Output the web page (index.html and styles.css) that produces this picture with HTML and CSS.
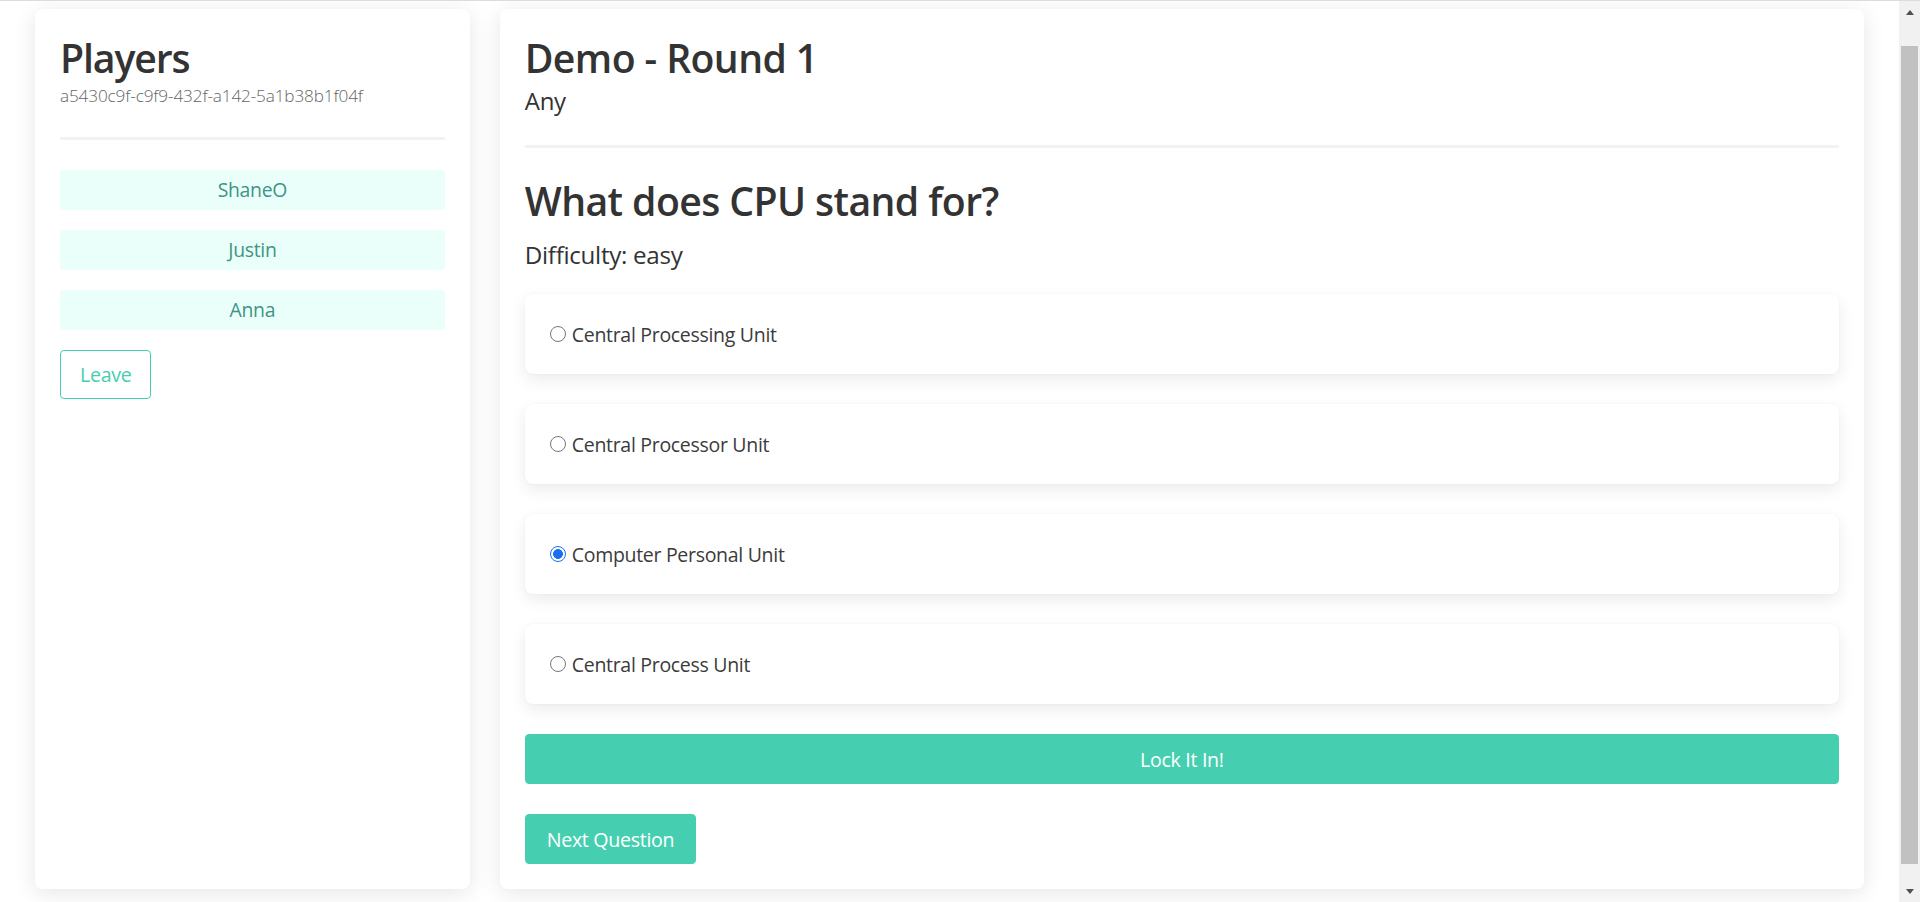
FILE: index.html
```html
<!DOCTYPE html>
<html lang="en">
<head>
<meta charset="utf-8">
<title>Trivia - Demo</title>
<link rel="stylesheet" href="styles.css">
</head>
<body>
<div class="viewport">
  <div class="page">
    <aside class="card players">
      <h2 class="title title-players">Players</h2>
      <div class="room-id">a5430c9f-c9f9-432f-a142-5a1b38b1f04f</div>
      <hr class="divider">
      <ul class="player-list">
        <li class="player">ShaneO</li>
        <li class="player">Justin</li>
        <li class="player">Anna</li>
      </ul>
      <button class="btn btn-outline" type="button">Leave</button>
    </aside>
    <main class="card game">
      <h1 class="title">Demo - Round 1</h1>
      <div class="category">Any</div>
      <hr class="divider">
      <h2 class="question">What does CPU stand for?</h2>
      <div class="difficulty">Difficulty: easy</div>
      <form class="answers">
        <label class="answer"><input type="radio" name="answer"><span>Central Processing Unit</span></label>
        <label class="answer"><input type="radio" name="answer"><span>Central Processor Unit</span></label>
        <label class="answer"><input type="radio" name="answer" checked><span>Computer Personal Unit</span></label>
        <label class="answer"><input type="radio" name="answer"><span>Central Process Unit</span></label>
      </form>
      <button class="btn btn-primary btn-block" type="button">Lock It In!</button>
      <div class="actions">
        <button class="btn btn-primary" type="button">Next Question</button>
      </div>
    </main>
  </div>
</div>
<div class="scrollbar" aria-hidden="true">
  <div class="sb-btn sb-up"><span class="arrow-up"></span></div>
  <div class="sb-thumb"></div>
  <div class="sb-btn sb-down"><span class="arrow-down"></span></div>
</div>
</body>
</html>
```
FILE: styles.css
```css
* { box-sizing: border-box; }

html, body {
  height: 902px;
  overflow: hidden;
}

body {
  margin: 0;
  display: flex;
  border-top: 1px solid #dcdcdc;
  font-family: "Open Sans", "Noto Sans", sans-serif;
  color: #333;
  background: #fff;
}

.viewport {
  flex: 1 1 auto;
  min-width: 0;
  padding: 8px 35px 0;
}

/* browser scrollbar */
.scrollbar {
  flex: 0 0 21px;
  display: flex;
  flex-direction: column;
  background: #f1f1f1;
}
.sb-btn { display: flex; justify-content: center; }
.sb-up { height: 45px; align-items: flex-start; padding-top: 9px; }
.sb-down { height: 38px; align-items: flex-end; padding-bottom: 8px; }
.sb-thumb { flex: 1 1 auto; margin: 0 2px; background: #c1c1c1; }
.arrow-up, .arrow-down {
  width: 0;
  height: 0;
  border-left: 4.5px solid transparent;
  border-right: 4.5px solid transparent;
}
.arrow-up { border-bottom: 5px solid #505050; }
.arrow-down { border-top: 5px solid #505050; }

.page {
  display: flex;
  gap: 30px;
  align-items: stretch;
}

.card {
  background: #fff;
  border-radius: 8px;
  box-shadow: 0 4px 22px rgba(0, 0, 0, 0.1);
  padding: 25px;
}

.players { flex: 0 0 calc(25% - 22.5px); }
.game { flex: 1 1 auto; min-width: 0; }

.title, .question {
  margin: 0;
  font-size: 39.2px;
  line-height: 48px;
  font-weight: 600;
  letter-spacing: -0.6px;
  color: #333;
}

.title-players { letter-spacing: -1.1px; }

.room-id {
  margin-top: 2px;
  font-size: 17.2px;
  line-height: 24px;
  font-weight: 300;
  color: #666;
  letter-spacing: -0.15px;
}

.divider {
  margin: 29px 0 0;
  border: 0;
  height: 3px;
  background: #f2f2f2;
}

.player-list {
  list-style: none;
  margin: 30px 0 0;
  padding: 0;
  display: flex;
  flex-direction: column;
  gap: 20px;
}

.player {
  height: 40px;
  line-height: 40px;
  text-align: center;
  background: #eafffa;
  color: #3c9585;
  border-radius: 4px;
  font-size: 19.4px;
  letter-spacing: -0.3px;
}

.btn {
  font-family: inherit;
  font-size: 19.6px;
  letter-spacing: -0.3px;
  border-radius: 4px;
  cursor: pointer;
  height: 50px;
  padding: 0 21px;
}

.btn-outline {
  margin-top: 20px;
  height: 49px;
  padding: 0 19px;
  background: #fff;
  color: #45cfb0;
  border: 1px solid #45cfb0;
}

.btn-primary {
  background: #45cfb0;
  color: #fff;
  border: 1px solid #45cfb0;
}

.btn-block {
  display: block;
  width: 100%;
  margin-top: 30px;
}

.actions { margin-top: 30px; display: flex; }

.category {
  margin-top: 4px;
  font-size: 24px;
  line-height: 29px;
  letter-spacing: -0.3px;
}

.game .divider { margin-top: 30px; }

.question { margin-top: 29px; }

.difficulty {
  margin-top: 15px;
  font-size: 24.2px;
  line-height: 29px;
  letter-spacing: -0.3px;
}

.answers {
  margin: 25px 0 0;
  display: flex;
  flex-direction: column;
  gap: 30px;
}

.answer {
  height: 80px;
  display: flex;
  align-items: center;
  padding: 0 25px;
  background: #fff;
  border-radius: 8px;
  box-shadow: 0 6px 16px rgba(0, 0, 0, 0.08), 0 0 2px rgba(0, 0, 0, 0.05);
  font-size: 19.5px;
  letter-spacing: -0.3px;
  color: #3b3b3b;
  cursor: pointer;
}

.answer input {
  appearance: none;
  -webkit-appearance: none;
  margin: 0 6px 0 0;
  width: 16px;
  height: 16px;
  border-radius: 50%;
  border: 1.3px solid #767676;
  background: #fff;
  flex: 0 0 auto;
}

.answer input:checked {
  border-color: #1a6ff0;
  background: radial-gradient(circle, #1a6ff0 0 4.6px, #fff 5.2px);
}
```
